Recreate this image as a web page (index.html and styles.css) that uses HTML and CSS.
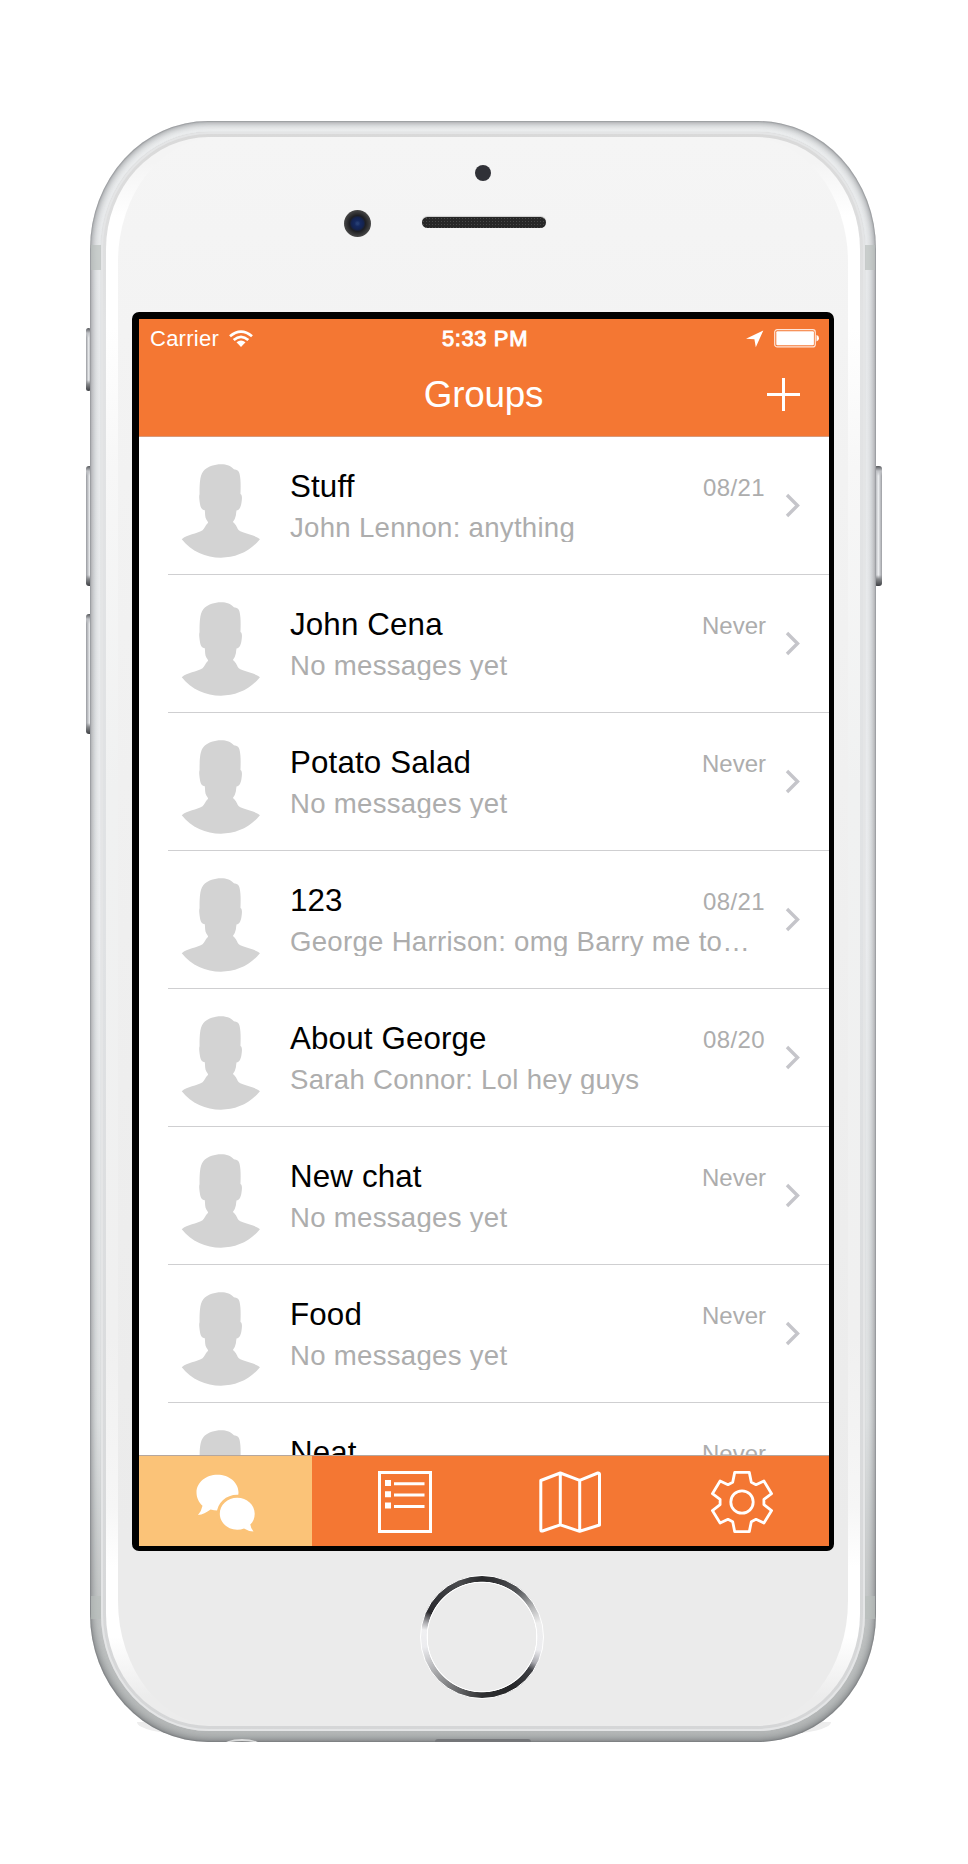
FILE: index.html
```html
<!DOCTYPE html>
<html lang="en">
<head>
<meta charset="utf-8">
<title>Groups</title>
<link rel="stylesheet" href="styles.css">
</head>
<body>
<svg class="defs" width="0" height="0" aria-hidden="true">
  <symbol id="person" viewBox="186 490 240 285"><path d="M307 491C285 491 268 498 257 507C243 520 241 540 241 582C239 586 240 596 242 610C244 622 247 629 257 630C258 640 257 651 262 659Q266 664 267 668C258 676 256 686 250 691C232 702 204 704 187 718C216 755 260 774 306 774C350 774 394 756 424 718C408 704 374 701 360 691C355 686 353 674 342 666Q349 657 351 646Q352 638 353 631C362 630 366 620 368 608C370 596 371 584 365 581C366 556 366 535 362 519C360 510 355 507 345 506C338 497 322 491 307 491Z"/></symbol>
  <symbol id="chevron" viewBox="0 0 15 25"><path d="M2 2L12.5 12.5L2 23" fill="none" stroke="#c5c5ca" stroke-width="3.4"/></symbol>
</svg>
<div class="phone">
  <i class="key key-mute"></i><i class="key key-up"></i><i class="key key-down"></i><i class="key key-power"></i>
  <i class="foot foot-left"></i><i class="foot foot-right"></i>
  <div class="shell">
    <i class="band band-top"></i><i class="band band-bottom"></i>
    <i class="jack"></i><i class="port"></i>
    <div class="rim"><div class="edge"><div class="glass"></div></div></div>
  </div>
  <i class="sensor"></i><i class="camera"></i><i class="speaker"></i>
  <div class="screen">
    <header class="header">
      <div class="status">
        <div class="carrier"><span>Carrier</span>
          <svg width="24" height="18" viewBox="0 0 24 18" fill="none" stroke="#fff" stroke-width="2.8"><path d="M1 6.3Q12-3 23 6.3M4.7 10Q12 3.7 19.3 10"/><path d="M7.5 12.3Q12 8.6 16.5 12.3L12 17Z" fill="#fff" stroke="none"/></svg>
        </div>
        <div class="clock">5:33 PM</div>
        <div class="power">
          <svg width="18" height="18" viewBox="0 0 18 18" fill="#fff"><path d="M17.3.5L0 8.8L8.4 9.2L9.8 17.3Z"/></svg>
          <svg width="46" height="19" viewBox="0 0 46 19"><rect x=".7" y=".7" width="40.6" height="17.2" rx="2.5" fill="none" stroke="#ffe5d8" stroke-width="1.2"/><rect x="2.3" y="2.3" width="37.6" height="14" rx="1" fill="#fff"/><path d="M42.5 6Q45 6.5 45 9.3T42.5 12.6Z" fill="#fff"/></svg>
        </div>
      </div>
      <div class="nav">
        <h1>Groups</h1>
        <svg class="plus" width="33" height="33" viewBox="0 0 33 33" stroke="#fff" stroke-width="3"><path d="M16.5 0V33M0 16.5H33"/></svg>
      </div>
    </header>
    <main class="list">
      <div class="row"><svg class="avatar"><use href="#person"/></svg><div class="copy"><div class="top"><h2>Stuff</h2><time class="date">08/21</time></div><p>John Lennon: anything</p></div><svg class="chev"><use href="#chevron"/></svg></div>
      <div class="row"><svg class="avatar"><use href="#person"/></svg><div class="copy"><div class="top"><h2>John Cena</h2><time>Never</time></div><p>No messages yet</p></div><svg class="chev"><use href="#chevron"/></svg></div>
      <div class="row"><svg class="avatar"><use href="#person"/></svg><div class="copy"><div class="top"><h2>Potato Salad</h2><time>Never</time></div><p>No messages yet</p></div><svg class="chev"><use href="#chevron"/></svg></div>
      <div class="row"><svg class="avatar"><use href="#person"/></svg><div class="copy"><div class="top"><h2>123</h2><time class="date">08/21</time></div><p>George Harrison: omg Barry me to…</p></div><svg class="chev"><use href="#chevron"/></svg></div>
      <div class="row"><svg class="avatar"><use href="#person"/></svg><div class="copy"><div class="top"><h2>About George</h2><time class="date">08/20</time></div><p>Sarah Connor: Lol hey guys</p></div><svg class="chev"><use href="#chevron"/></svg></div>
      <div class="row"><svg class="avatar"><use href="#person"/></svg><div class="copy"><div class="top"><h2>New chat</h2><time>Never</time></div><p>No messages yet</p></div><svg class="chev"><use href="#chevron"/></svg></div>
      <div class="row"><svg class="avatar"><use href="#person"/></svg><div class="copy"><div class="top"><h2>Food</h2><time>Never</time></div><p>No messages yet</p></div><svg class="chev"><use href="#chevron"/></svg></div>
      <div class="row"><svg class="avatar"><use href="#person"/></svg><div class="copy"><div class="top"><h2>Neat</h2><time>Never</time></div></div><svg class="chev"><use href="#chevron"/></svg></div>
    </main>
    <nav class="tabs">
      <a class="tab active"><svg width="60" height="60" viewBox="0 0 60 60" fill="#fff"><path d="M21.5 2.7C33 2.7 42.5 10.5 42.5 20.3S33 38.5 21.5 38.5Q18 38.5 14.6 37.5C10.5 40.5 6.5 42.8 2 43Q5.5 39 6.5 33.8C2.8 30.5.5 25.8.5 20.3C.5 10.5 10 2.7 21.5 2.7Z"/><path d="M41.2 25.8C51 25.8 58.7 33 58.7 41.8C58.7 46.5 57 50 54.3 52.5Q54.8 56.5 57.5 59.5Q52 59.2 48 56.5Q45 57.7 41.2 57.7C31.5 57.7 23.8 50.5 23.8 41.8S31.5 25.8 41.2 25.8Z" stroke="#fbc378" stroke-width="6" paint-order="stroke"/></svg></a>
      <a class="tab notes"><svg width="54" height="62" viewBox="0 0 54 62" fill="#fff"><rect x="1.5" y="1.5" width="51" height="59" fill="none" stroke="#fff" stroke-width="3"/><path d="M7 9h6v6H7zM7 20.3h6v6H7zM7 31.6h6v6H7zM16 11.3h30.5v3H16zM16 22.6h30.5v3H16zM16 33.9h30.5v3H16z"/></svg></a>
      <a class="tab map"><svg width="62" height="62" viewBox="0 0 62 62" fill="none" stroke="#fff" stroke-width="3" stroke-linejoin="round"><path d="M1.8 9.5L21.3 2L40.7 9.3L58.8 2Q60.5 1.6 60.5 3.3V54L40.7 60.3L21.3 53.8L3.5 60Q1.8 60.5 1.8 58.8ZM21.3 2V53.8M40.7 9.3V60.3"/></svg></a>
      <a class="tab settings"><svg width="64" height="64" viewBox="-32 -32 64 64" fill="none" stroke="#fff" stroke-width="2.8" stroke-linejoin="round"><circle r="11.2"/><path d="M-7.3-29.6H7.3L9.3-19.7L14-17.3L21.9-21L29.6-8.3L21.9-2.7V2.7L29.6 8.6L21.9 21L14 17.3L9.3 19.7L7.3 29.6H-7.3L-9.3 19.7L-14 17.3L-21.9 21L-29.6 8.6L-21.9 2.7V-2.7L-29.6-8.3L-21.9-21L-14-17.3L-9.3-19.7Z"/></svg></a>
    </nav>
  </div>
  <i class="home"></i>
</div>
</body>
</html>
```
FILE: styles.css
```css
* { box-sizing: border-box; }
body { margin: 0; padding: 121px 0 122px 90px; background: #fff; font-family: "Liberation Sans", Arial, sans-serif; }
h1, h2, p { margin: 0; font-weight: 400; }
i { display: block; }
.defs { position: absolute; }

/* Hardware */
.phone { position: relative; width: 786px; height: 1621px; padding: 191px 42px 0; }
.shell { position: absolute; inset: 0; padding: 11px; overflow: hidden; border-radius: 118px / 128px; background: linear-gradient(#edeff0, #e8eaec 12%, #eceef0 50%, #dfe2e3 80%, #bec1c1 94%, #b3b6b6); box-shadow: inset 0 0 9px 1px rgba(55, 58, 64, .6), inset 0 0 1px 1px rgba(90, 92, 96, .2); }
.rim { position: relative; height: 100%; padding: 5px; border-radius: 108px / 117px; background: linear-gradient(#d9d9d9, #e2e3e4 12%, #e0e2e4 50%, #d5d6d7); box-shadow: inset 0 0 0 2px #e4e5e6, 0 0 1px #b8babb; }
.edge { height: 100%; padding: 0 12px; border-radius: 103px / 112px; overflow: hidden; background: linear-gradient(#f4f4f4 25px, #fff 80px, #fff 190px, #f7f7f7 330px, #f0f1f1 650px, #f0f0f0 1200px, #f6f6f6 1370px, #fff 1430px, #fff 1500px, #ececec 1560px); }
.glass { height: 100%; border-radius: 100px / 125px; background: linear-gradient(#f5f5f5, #f3f3f3 12%, #ebebeb 88%, #ebebeb); }
.band { position: absolute; left: 1px; right: 1px; height: 25px; background: rgba(185, 190, 188, .65); }
.band-top { top: 124px; }
.band-bottom { top: 1475px; height: 23px; }
.jack { position: absolute; left: 132px; bottom: -12px; width: 40px; height: 15px; border-radius: 50%; background: #888a8b; border-top: 2px solid #dcdddd; }
.port { position: absolute; left: 345px; bottom: 0; width: 96px; height: 3px; border-radius: 8px 8px 0 0; background: #747679; }
.foot { position: absolute; bottom: 8px; width: 60px; height: 12px; background: #ededed; }
.foot-left { left: 47px; border-radius: 0 0 0 50px / 0 0 0 12px; }
.foot-right { right: 45px; border-radius: 0 0 50px 0 / 0 0 12px 0; }
.key { position: absolute; left: -4px; width: 7px; height: 120px; border-radius: 3px; background: linear-gradient(#55575b, #bfc1c5 5px, transparent 10px calc(100% - 11px), #85878a calc(100% - 7px), #3e4044), linear-gradient(90deg, #999ba0, #eceef0 55%, #9a9ca1); }
.key-mute { top: 207px; height: 63px; width: 5px; }
.key-up { top: 345px; }
.key-down { top: 493px; }
.key-power { top: 345px; left: auto; right: -6px; width: 8px; }
.sensor { position: absolute; left: 385px; top: 44px; width: 16px; height: 16px; border-radius: 50%; background: #303137; }
.camera { position: absolute; left: 254px; top: 89px; width: 27px; height: 27px; border-radius: 50%; background: radial-gradient(circle, #263e72 0 1px, #15295f 3px, #14234f 6px, #1e1f23 8px, #444 13px); }
.speaker { position: absolute; left: 332px; top: 96px; width: 124px; height: 11px; border-radius: 6px; background: radial-gradient(#484848 25%, transparent 30%) 0 0 / 3px 3px, #272727; box-shadow: 0 -1px 1px #ccc; }
.home { position: absolute; left: 330px; top: 1454px; width: 124px; height: 124px; border-radius: 50%; border: 1px solid #fff; background: radial-gradient(circle, #ebebeb 54px, #fff 54.5px 55px, transparent 55.7px), conic-gradient(#28292b, #3b3c3f 20deg, #55575a 38deg, #b8b9ba 60deg, #eee 76deg, #ededf0 103deg, #aaaab0 116deg, #404146 124deg, #252628 150deg, #303133 180deg, #68696b 205deg, #a1a2a4 230deg, #ececef 260deg, #f0f0f2 277deg, #a5a5a9 285deg, #29292d 295deg, #35363a 315deg, #4b4c4f 337deg, #28292b); }

/* App */
.screen { position: relative; display: flex; flex-direction: column; width: 702px; height: 1239px; border: solid #000; border-width: 7px 5px 5px 7px; border-radius: 7px; background: #fff; }
.header { flex: none; height: 118px; background: #f47733; color: #fff; border-bottom: 1px solid #d79a7b; }
.status { display: grid; grid-template-columns: 1fr auto 1fr; align-items: center; height: 38px; padding: 1px 9px 0 11px; font-size: 22px; }
.carrier { display: flex; align-items: center; gap: 10px; letter-spacing: .25px; }
.clock { letter-spacing: .6px; -webkit-text-stroke: .9px #fff; }
.power { display: flex; align-items: center; justify-content: flex-end; gap: 9px; }
.power svg:first-child { margin-right: 1px; }
.nav { display: grid; grid-template-columns: 1fr auto 1fr; align-items: center; height: 75px; padding-right: 29px; padding-left: 28px; }
.nav h1 { grid-column: 2; font-size: 36.8px; line-height: 44px; letter-spacing: -.2px; }
.plus { justify-self: end; }
.list { flex: 1; min-height: 0; overflow: hidden; background: #fff; border-bottom: 1px solid #b5a79e; }
.row { display: flex; height: 138px; margin-left: 29px; padding: 27px 29px 0 13px; border-bottom: 1px solid #cfcfd1; }
.avatar { flex: none; width: 80px; height: 94px; fill: #d3d3d3; }
.copy { flex: 1; min-width: 0; margin: 4px 0 0 29px; }
.top { display: flex; justify-content: space-between; height: 38px; line-height: 38px; }
.copy h2 { font-size: 31.3px; letter-spacing: .15px; color: #000; }
.copy time { padding-top: 1px; font-size: 24px; color: #adadad; }
.copy .date { padding-right: 1px; letter-spacing: .4px; }
.copy p { height: 30px; margin-top: 6px; overflow: hidden; font-size: 27.6px; line-height: 32px; letter-spacing: .28px; white-space: nowrap; color: #adadad; }
.chev { flex: none; width: 15px; height: 25px; margin: 29px 0 0 19px; }
.tabs { flex: none; display: grid; grid-template-columns: repeat(4, 1fr); height: 90px; background: #f47733; }
.tab { display: flex; align-items: center; justify-content: center; padding-top: 1px; }
.active { padding-left: 1px; background: #fbc378; }
.notes { padding-left: 15px; }
.settings { padding-right: 1px; }
```
